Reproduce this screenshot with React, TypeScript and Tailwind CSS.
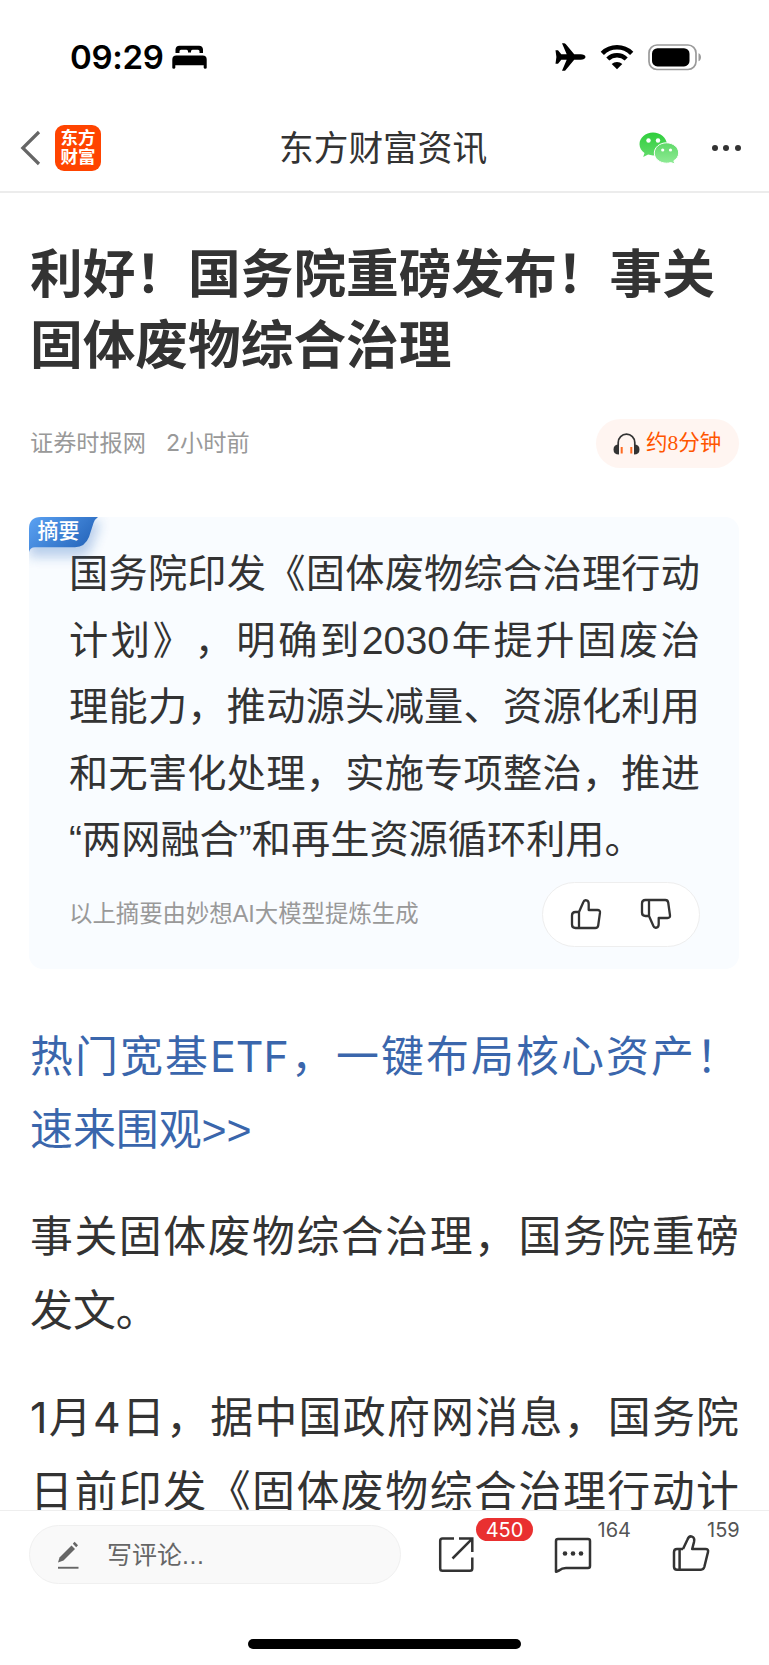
import React from 'react';

const SUMMARY_LINES = [
    '国务院印发《固体废物综合治理行动',
    '计划》，明确到2030年提升固废治',
    '理能力，推动源头减量、资源化利用',
    '和无害化处理，实施专项整治，推进',
    '“两网融合”和再生资源循环利用。',
];

const PARAGRAPHS = [
    { link: true, lines: ['热门宽基ETF，一键布局核心资产！', '速来围观>>'] },
    { link: false, lines: ['事关固体废物综合治理，国务院重磅', '发文。'] },
    { link: false, lines: ['1月4日，据中国政府网消息，国务院', '日前印发《固体废物综合治理行动计'] },
];

const StatusBar: React.FC = () => (
    <div className="flex h-[105px] shrink-0 items-center pt-[9px] pl-[70px] pr-[67px]">
        <span className="font-['Inter'] text-[33px] font-semibold leading-none tracking-[-0.3px] text-black">09:29</span>
        <svg className="ml-[8px]" width="35" height="24" viewBox="0 0 35 24">
            <path d="M3.500 8V4.500A4 4 0 0 1 7.500 .7h19.500a4 4 0 0 1 4 3.800V8h-3.500V6.300q0-1.500-1.500-1.500h-5.500q-1.500 0-1.500 1.500V7.500h-3V6.300q0-1.500-1.500-1.500H9q-1.500 0-1.500 1.500V8Z" />
            <path d="M.3 14.500q0-4 4-4h26.400q4 0 4 4v8.300q0 1-1.500 1t-1.500-1v-2.500H3.300v2.500q0 1-1.500 1t-1.500-1Z" />
        </svg>
        <div className="ml-auto flex items-center">
            <svg width="31" height="28" viewBox="0 0 31 28">
                <path d="M30.500 14c0 1.600-2.300 2.700-4.700 2.700h-6.600l-8.500 10.200c-.5.600-1 .8-2 .8H7l4.700-11H6.300L3 20.800H.5L1.400 14 .5 7.200H3l3.300 4.100h5.400L7 .3h1.700c1 0 1.500.2 2 .8l8.500 10.200h6.600c2.400 0 4.700 1.100 4.700 2.700Z" />
            </svg>
            <svg className="ml-[14px]" width="34" height="26" viewBox="0 0 34 26">
                <path d="M2.300 9.300a21 21 0 0 1 29.400 0" fill="none" stroke="#000" strokeWidth="4.600" />
                <path d="M7.800 15a13.300 13.300 0 0 1 18.400 0" fill="none" stroke="#000" strokeWidth="4.400" />
                <path d="M17 25.300l-5.300-5.200a7.600 7.600 0 0 1 10.600 0Z" />
            </svg>
            <svg className="ml-[14px]" width="54" height="27" viewBox="0 0 54 27">
                <rect x="1" y="1" width="47" height="24.500" rx="8" fill="none" stroke="#9a9a9a" strokeWidth="1.700" />
                <rect x="4" y="4.200" width="37.500" height="18.200" rx="5.500" />
                <path d="M50.500 9.200c3.300 1 3.300 7 0 8Z" fill="#9a9a9a" />
            </svg>
        </div>
    </div>
);

const NavBar: React.FC = () => (
    <header className="flex h-[88px] shrink-0 items-center border-b-2 border-[#ececec] pl-[20px] pr-[28px]">
        <svg width="21" height="36" viewBox="0 0 21 36" fill="none" stroke="#666" strokeWidth="3.200">
            <path d="M19 2L2.800 18 19 34" />
        </svg>
        <div className="ml-[14px] flex h-[46px] w-[46px] items-start justify-center rounded-[9px] bg-[#ff4400] pt-[4px]">
            <span className="w-[35px] break-all text-[17.500px] font-bold leading-[19px] text-white">东方财富</span>
        </div>
        <h1 className="ml-[178px] mt-[2px] whitespace-nowrap text-[34.700px] leading-[40px] text-[#333]">东方财富资讯</h1>
        <svg className="-mt-px ml-auto" width="40" height="32" viewBox="0 0 40 32">
            <defs>
                <linearGradient id="wxBack" x1="0" y1="0" x2="0" y2="1">
                    <stop offset="0" stopColor="#2fce3c" />
                    <stop offset="1" stopColor="#63db6b" />
                </linearGradient>
                <linearGradient id="wxFront" x1="0" y1="0" x2="0" y2="1">
                    <stop offset="0" stopColor="#5fd968" />
                    <stop offset="1" stopColor="#90eb96" />
                </linearGradient>
            </defs>
            <path d="M14 .5C6.500.5.500 5.700.500 12.200c0 3.600 2 6.700 5 8.900L4.200 25l4.900-2.400c1.600.5 3.200.8 4.900.8 7.500 0 13.800-4.800 13.800-11.200S21.500.5 14 .5Z" fill="url(#wxBack)" />
            <path d="M27.500 10.800c-6.700 0-12.200 4.500-12.200 10.200s5.500 10.200 12.200 10.200c1.500 0 2.900-.2 4.200-.6L36 32l-1.200-3.200c3-1.900 4.900-4.600 4.900-7.800 0-5.700-5.500-10.200-12.200-10.200Z" fill="url(#wxFront)" stroke="#fff" strokeWidth="1" />
            <circle cx="9.500" cy="8.500" r="2.200" fill="#fff" />
            <circle cx="19" cy="8.500" r="2.200" fill="#fff" />
            <circle cx="23.700" cy="18" r="1.600" fill="#fff" />
            <circle cx="31.500" cy="18" r="1.600" fill="#fff" />
        </svg>
        <div className="ml-[33px] flex gap-[5.700px]">
            <i className="h-[6px] w-[6px] rounded-full bg-[#333]" />
            <i className="h-[6px] w-[6px] rounded-full bg-[#333]" />
            <i className="h-[6px] w-[6px] rounded-full bg-[#333]" />
        </div>
    </header>
);

const SummaryCard: React.FC = () => (
    <section className="relative -ml-px mt-[49px] h-[452px] rounded-[14px] bg-[#f9fcff] pl-[40px] pr-[39px] pt-[24px]">
        <div className="absolute left-0 top-0">
            <svg className="overflow-visible" width="70" height="36" viewBox="0 0 70 36">
                <defs>
                    <linearGradient id="tagFill" x1="0" y1="0" x2="1" y2="0.500">
                        <stop offset="0" stopColor="#5ba2f3" />
                        <stop offset="1" stopColor="#2868bd" />
                    </linearGradient>
                    <filter id="tagBlur" x="-50%" y="-50%" width="200%" height="200%">
                        <feGaussianBlur stdDeviation="6" />
                    </filter>
                    <clipPath id="tagClip">
                        <path d="M0 12Q0 0 12 0H120V60H0Z" />
                    </clipPath>
                </defs>
                <g clipPath="url(#tagClip)">
                    <path d="M0 4H72L62 32Q58 40 50 40H0Z" fill="#2868bd" opacity="0.300" filter="url(#tagBlur)" />
                </g>
                <path d="M0 12Q0 0 12 0H69Q66 2 64.500 6L60 20Q56 30 46 30.300H6Q1 30.500 0 35Z" fill="url(#tagFill)" />
            </svg>
            <span className="absolute left-[8.500px] top-[-1px] whitespace-nowrap text-[21px] font-medium leading-[30px] text-white">摘要</span>
        </div>
        {SUMMARY_LINES.map((line, i) => (
            <p
                key={line}
                className={
                    i < SUMMARY_LINES.length - 1
                        ? 'h-[66.500px] whitespace-nowrap text-[39.200px] leading-[66.500px] text-[#333] [text-align-last:justify]'
                        : 'h-[66.500px] whitespace-nowrap text-[39.200px] leading-[66.500px] text-[#333]'
                }
            >
                {line}
            </p>
        ))}
        <div className="mt-[8px] flex h-[65px] items-center justify-between">
            <span className="pt-px text-[23.400px] text-[#999]">以上摘要由妙想AI大模型提炼生成</span>
            <div className="flex h-[65px] w-[158px] items-center justify-between rounded-full border border-[#eee] bg-white px-[27px]">
                <svg width="32" height="32" viewBox="0 0 32 32" fill="none" stroke="#333" strokeWidth="2.300" strokeLinejoin="round">
                    <path d="M9 14L13.300 4.200Q14.200 1.800 16.500 2.400T18.700 6V12H27.500Q30.300 12 30 14.700L28.200 27.500Q27.800 30 25.300 30H5.500Q2 30 2 26.500V17.500Q2 14 5.500 14ZM9 14V30" />
                </svg>
                <svg width="32" height="32" viewBox="0 0 32 32" fill="none" stroke="#333" strokeWidth="2.300" strokeLinejoin="round">
                    <path d="M9 18L13.300 27.800Q14.200 30.200 16.500 29.600T18.700 26V20H27.500Q30.300 20 30 17.300L28.200 4.500Q27.800 2 25.300 2H5.500Q2 2 2 5.500V14.500Q2 18 5.500 18ZM9 18V2" />
                </svg>
            </div>
        </div>
    </section>
);

const BottomBar: React.FC = () => (
    <footer className="absolute inset-x-0 bottom-0 h-[155px] border-t border-[#eee] bg-white">
        <div className="flex pl-[29px]">
            <div className="mt-[14px] flex h-[59px] w-[372px] items-center rounded-full border border-[#f0f0f0] bg-[#f9f9f9] pl-[27px]">
                <svg width="23" height="30" viewBox="0 0 23 30" fill="#666">
                    <path d="M14.500 5.500L18 9 6.500 20.500 1 22.500 2.500 17.500Z" />
                    <path d="M15.800 3.800L17.600 1.800 21 5.300 19.200 7.300Z" />
                    <rect x="1" y="26.800" width="20.500" height="1.900" />
                </svg>
                <span className="ml-[27px] text-[25px] leading-[30px] text-[#666]">
                    写评论<span className="tracking-[0.600px]">...</span>
                </span>
            </div>
            <div className="relative ml-[37px] mt-[25px] h-[38px] w-[38px]">
                <svg width="38" height="38" viewBox="0 0 38 38" fill="none" stroke="#333" strokeWidth="2.500">
                    <path d="M16 2.600H4.500Q2.200 2.600 2.200 5V32.500Q2.200 34.800 4.500 34.800H32Q34.300 34.800 34.300 32.500V21.500" />
                    <path d="M21 2.600H34.300V16M33.800 3.200L14.500 22.500" />
                </svg>
                <span className="absolute left-[38px] top-[-18px] flex h-[23px] w-[57px] items-center justify-center rounded-full bg-[#e93030] font-['Inter'] text-[20px] leading-none text-white">450</span>
            </div>
            <div className="relative ml-[78px] mt-[26px] h-[38px] w-[38px]">
                <svg width="38" height="38" viewBox="0 0 38 38" fill="none" stroke="#333" strokeWidth="2.500" strokeLinejoin="round">
                    <path d="M4 2H34Q36 2 36 4V29Q36 31 34 31H12Q8 31 5 33.500L2 34.800V4Q2 2 4 2Z" />
                    <g fill="#333" stroke="none">
                        <circle cx="11" cy="16.500" r="2.300" />
                        <circle cx="19" cy="16.500" r="2.300" />
                        <circle cx="27" cy="16.500" r="2.300" />
                    </g>
                </svg>
                <span className="absolute left-[43.500px] top-[-18px] font-['Inter'] text-[20px] leading-[22px] text-[#555]">164</span>
            </div>
            <div className="relative ml-[80px] mt-[23px] h-[38px] w-[38px]">
                <svg width="38" height="38" viewBox="0 0 38 38" fill="none" stroke="#333" strokeWidth="2.500" strokeLinejoin="round">
                    <path d="M11 15L15.500 5.500Q17 1.600 20 2.600T22 8L20.200 15H33.500Q36.700 15 36 18L32.300 33Q31.500 35.700 29 35.700H5Q2 35.700 2 32.700V18Q2 15 5 15H11M7.600 15V35.700" />
                </svg>
                <span className="absolute left-[35px] top-[-15px] font-['Inter'] text-[20px] leading-[22px] text-[#555]">159</span>
            </div>
        </div>
        <div className="absolute bottom-[16px] left-[248px] h-[10px] w-[273px] rounded-full bg-black" />
    </footer>
);

const App: React.FC = () => {
    return (
        <div className="relative flex h-[1665px] w-[769px] flex-col overflow-hidden bg-white font-['Liberation_Sans','Noto_Sans_CJK_SC',sans-serif] [text-spacing-trim:space-all]">
            <StatusBar />
            <NavBar />
            <main className="px-[30px] pt-[42px]">
                <h2 className="whitespace-nowrap font-['Noto_Sans_CJK_SC',sans-serif] text-[52.700px] font-bold leading-[70.500px] text-[#333]">
                    利好！国务院重磅发布！事关
                    <br />
                    固体废物综合治理
                </h2>
                <div className="mt-[43px] flex h-[49px] items-center text-[23.200px] text-[#999]">
                    <span>证券时报网</span>
                    <span className="ml-[20px] font-['Inter','Noto_Sans_CJK_SC',sans-serif]">2小时前</span>
                    <div className="ml-auto flex h-[49px] w-[143px] items-center rounded-full bg-[#fff5f1] pl-[17px] text-[21.500px] text-[#ff5500]">
                        <svg width="27" height="24" viewBox="0 0 27 24">
                            <path d="M5.200 13V10.500a8.300 8.300 0 0 1 16.600 0V13" fill="none" stroke="#333" strokeWidth="1.700" />
                            <path d="M6 12.500V22.500Q.5 22.500.5 17.500T6 12.500ZM21 12.500V22.500Q26.500 22.500 26.500 17.500T21 12.500Z" fill="#333" />
                            <path d="M8.700 15V21.500M18.300 15V21.500" stroke="#ff6a20" strokeWidth="2" />
                        </svg>
                        <span className="ml-[6px] whitespace-nowrap font-['Liberation_Serif','Noto_Sans_CJK_SC',serif]">约8分钟</span>
                    </div>
                </div>
                <SummaryCard />
                <div className="mt-[49.500px] space-y-[31px]">
                    {PARAGRAPHS.map(({ link, lines }) => (
                        <div key={lines[0]} className={link ? 'text-[#3a66ac]' : 'text-[#333]'}>
                            {lines.map((line) => (
                                <p
                                    key={line}
                                    className={
                                        line.length > 10
                                            ? "h-[74.800px] whitespace-nowrap font-['Inter','Noto_Sans_CJK_SC',sans-serif] text-[42.900px] leading-[74.800px] [text-align-last:justify]"
                                            : 'h-[74.800px] whitespace-nowrap text-[42.900px] leading-[74.800px]'
                                    }
                                >
                                    {line}
                                </p>
                            ))}
                        </div>
                    ))}
                </div>
            </main>
            <BottomBar />
        </div>
    );
};

export default App;
